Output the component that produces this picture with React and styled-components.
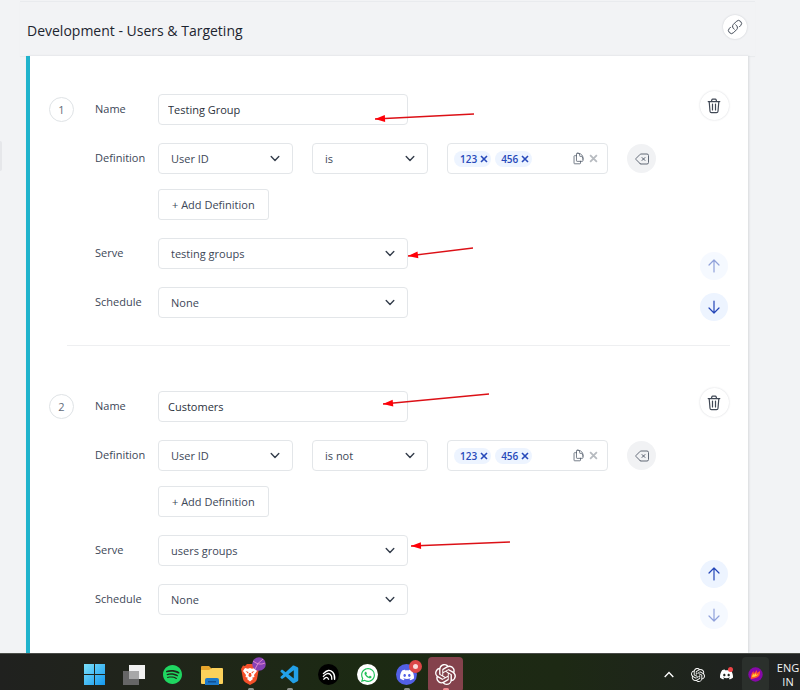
import React from "react";
import styled, { createGlobalStyle } from "styled-components";
import { HiOutlineLink, HiOutlineBackspace, HiOutlineDocumentDuplicate } from "react-icons/hi2";
import { SiSpotify, SiBrave, SiWhatsapp, SiDiscord, SiOpenai } from "react-icons/si";
import { VscVscode } from "react-icons/vsc";

const GlobalStyle = createGlobalStyle`
  *, *::before, *::after { box-sizing: border-box; }
  body {
    margin: 0;
    background: #f2f3f5;
    color: #3d4757;
    font-family: "Open Sans", "Noto Sans", sans-serif;
    font-size: 11px;
  }
  button, input, select { font: inherit; color: inherit; }
  button { cursor: pointer; }
`;

const Page = styled.div`
  min-height: 100vh;
  display: flex;
  flex-direction: column;
`;

const Main = styled.main`
  position: relative;
  flex: 1;
  display: flex;
  flex-direction: column;
`;

const Header = styled.header`
  display: flex;
  align-items: center;
  justify-content: space-between;
  height: 55px;
  margin: 1px 45px 0 20px;
  padding: 0 8px 4px 7px;
  border-top: 1px solid #e9ebee;
  box-shadow: 0 1px 1px rgba(30, 40, 60, 0.04);
`;

const Title = styled.h1`
  margin: 0;
  padding-top: 7px;
  font-size: 14px;
  line-height: 20px;
  font-weight: 500;
  color: #1d2530;
`;

const Panel = styled.section`
  flex: 1;
  margin: 0 52px 0 26px;
  padding: 0 19px;
  background: #fff;
  border-left: 4px solid #20b3cc;
  box-shadow: 1px 0 2px rgba(30, 40, 60, 0.12);
`;

const Group = styled.article`
  display: grid;
  grid-template-columns: 25px minmax(0, 1fr) 30px;
  column-gap: 21px;
  padding: ${(p) => (p.$first ? "35px 0 24px" : "42px 0 20px")};
`;

const Divider = styled.hr`
  height: 1px;
  margin: 0 -1px 0 18px;
  border: 0;
  background: #eeeff1;
`;

const Index = styled.span`
  display: flex;
  align-items: center;
  justify-content: center;
  width: 25px;
  height: 25px;
  margin-top: 6px;
  border: 1px solid #dfe3e6;
  border-radius: 50%;
  color: #606a78;
`;

const Fields = styled.div`
  display: flex;
  flex-direction: column;
  gap: 18px;
  padding: 3px 0 ${(p) => (p.$last ? 14 : 3)}px;
`;

const Row = styled.div`
  display: grid;
  grid-template-columns: 63px minmax(0, 1fr);
`;

const Label = styled.label`
  line-height: 30px;
  font-weight: 500;
`;

const Stack = styled.div`
  display: flex;
  flex-direction: column;
  align-items: flex-start;
  gap: 15px;
`;

const Conditions = styled.div`
  display: flex;
  align-items: center;
  gap: 19px;
  width: 100%;
`;

const TextField = styled.input`
  width: 100%;
  max-width: 250px;
  height: 31px;
  padding: 0 9px;
  border: 1px solid #e3e6e9;
  border-radius: 4px;
  background: #fff;
  color: #2b323c;
`;

const SelectBox = styled.div`
  display: grid;
  align-items: center;
  flex: 0 1 ${(p) => p.$width}px;
  width: 100%;
  max-width: ${(p) => p.$width}px;
  > * { grid-area: 1 / 1; }
  > svg { justify-self: end; margin-right: 13px; pointer-events: none; }
`;

const Select = styled.select`
  appearance: none;
  width: 100%;
  height: 31px;
  padding: 0 30px 0 12px;
  border: 1px solid #e3e6e9;
  border-radius: 4px;
  background: #fff;
  font-weight: 500;
`;

const TagBox = styled.div`
  display: flex;
  align-items: center;
  flex: 0 1 161px;
  height: 31px;
  padding: 0 9px 0 6px;
  gap: 4px;
  border: 1px solid #e3e6e9;
  border-radius: 4px;
`;

const Tag = styled.span`
  display: flex;
  align-items: center;
  gap: 3px;
  height: 16px;
  padding: 0 3px 0 6px;
  border-radius: 8px;
  background: #edf4ff;
  color: #2749ba;
  font-size: 10px;
  font-weight: 600;
`;

const PlainButton = styled.button`
  display: flex;
  padding: 0;
  border: 0;
  background: none;
  color: ${(p) => p.$color || "inherit"};
  margin-left: ${(p) => (p.$push ? "auto" : 0)};
`;

const AddButton = styled.button`
  height: 31px;
  padding: 0 13px;
  border: 1px solid #e3e6e9;
  border-radius: 3px;
  background: #fff;
  font-weight: 500;
  white-space: nowrap;
`;

const tones = {
  white: "background:#fff;color:#404855;box-shadow:0 0 2px rgba(30,40,60,.2);",
  gray: "background:#f1f2f4;color:#626a77;",
  blue: "background:#edf4ff;color:#2345b8;",
};

const RoundButton = styled.button`
  display: flex;
  align-items: center;
  justify-content: center;
  flex: none;
  width: ${(p) => p.$size || 28}px;
  height: ${(p) => p.$size || 28}px;
  padding: 0;
  border: 0;
  border-radius: 50%;
  ${(p) => tones[p.$tone]}
  &:disabled { opacity: 0.5; cursor: default; }
`;

const Side = styled.div`
  display: flex;
  flex-direction: column;
  align-items: center;
  justify-content: space-between;
`;

const Movers = styled.div`
  display: grid;
  gap: 13px;
`;

const Annotations = styled.svg`
  position: absolute;
  top: 0;
  left: 0;
  pointer-events: none;
`;

const Handle = styled.div`
  position: absolute;
  top: 141px;
  left: 0;
  width: 2px;
  height: 30px;
  border-radius: 0 2px 2px 0;
  background: #e6e7ea;
`;

const Taskbar = styled.footer`
  display: flex;
  height: 37px;
  padding: 0 0 0 75px;
  overflow: hidden;
  border-top: 1px solid #4b4e49;
  background: linear-gradient(90deg, #20211f 0%, #20251a 20%, #1c2a13 45%, #1d2914 70%, #1f231f 90%, #202222 100%);
  color: #fff;
`;

const Apps = styled.nav`
  display: flex;
`;

const Tray = styled.div`
  display: flex;
  margin-left: auto;
`;

const TaskButton = styled.button`
  position: relative;
  display: flex;
  align-items: center;
  justify-content: center;
  width: ${(p) => (p.$tray ? 27 : 35)}px;
  height: 35px;
  margin: 3px ${(p) => (p.$tray ? 1 : 2)}px 0;
  padding: 0;
  border: 0;
  border-radius: 4px;
  background: ${(p) => p.$bg || "transparent"};
  color: #fff;
  flex: none;
`;

const Running = styled.i`
  position: absolute;
  bottom: 1px;
  width: 6px;
  height: 3px;
  border-radius: 2px;
  background: ${(p) => p.$color || "#8d918b"};
`;

const Badge = styled.i`
  position: absolute;
  top: ${(p) => (p.$small ? 10 : 3)}px;
  right: ${(p) => (p.$small ? 7 : 2)}px;
  width: ${(p) => (p.$small ? 5 : 13)}px;
  height: ${(p) => (p.$small ? 5 : 13)}px;
  border-radius: 50%;
  border: ${(p) => (p.$small ? 0 : 4)}px solid #dc4648;
  background: ${(p) => (p.$small ? "#ee4447" : "#f9dcdc")};
`;

const Disc = styled.span`
  display: flex;
  align-items: center;
  justify-content: center;
  width: 21px;
  height: 21px;
  border-radius: 50%;
  background: ${(p) => p.$bg};
  color: ${(p) => p.$fg};
`;

const Language = styled.div`
  width: 24px;
  padding-top: 7px;
  margin-left: 6px;
  font-size: 11px;
  line-height: 14px;
  text-align: center;
  color: #f3f3f3;
`;

const Chevron = () => (
  <svg width="10" height="10" viewBox="0 0 10 10" fill="none" stroke="#343d4b" strokeWidth="1.4" strokeLinecap="round" strokeLinejoin="round">
    <path d="M1.2 2.600 5 6.400l3.800-3.800" />
  </svg>
);

const Cross = ({ size = 8 }) => (
  <svg width={size} height={size} viewBox="0 0 8 8" stroke="currentColor" strokeWidth="1.6">
    <path d="m1 1 6 6M7 1 1 7" />
  </svg>
);

const Trash = () => (
  <svg width="16" height="16" viewBox="0 0 16 16" fill="none" stroke="currentColor" strokeWidth="1.2" strokeLinecap="round" strokeLinejoin="round">
    <path d="M2.2 3.6h11.6M5.4 3.4l.5-1.6q.2-.6.8-.6h2.6q.6 0 .8.6l.5 1.6M3.2 3.8l.8 9.4q.1 1.4 1.5 1.4h5q1.4 0 1.5-1.4l.8-9.4M6.5 6v6M9.5 6v6" />
  </svg>
);

const Arrow = ({ down }) => (
  <svg width="14" height="14" viewBox="0 0 14 14" fill="none" stroke="currentColor" strokeWidth="1.2" strokeLinecap="round" strokeLinejoin="round">
    <path d={down ? "M7 1v12M2 8l5 5 5-5" : "M7 13V1M2 6l5-5 5 5"} />
  </svg>
);

const Pointer = ({ from, to }) => {
  const angle = (Math.atan2(to[1] - from[1], to[0] - from[0]) * 180) / Math.PI;
  return (
    <g>
      <path d={`M${from} L${to}`} stroke="#dc1016" strokeWidth="1.3" />
      <path d="M0 0-10-3.4v6.8z" fill="#ff0008" transform={`translate(${to}) rotate(${angle})`} />
    </g>
  );
};

function Dropdown({ id, value, width = 250, label }) {
  return (
    <SelectBox $width={width}>
      <Select id={id} aria-label={label} defaultValue={value}>
        <option>{value}</option>
      </Select>
      <Chevron />
    </SelectBox>
  );
}

function TargetGroup({ number, name, operator, serve, first, last }) {
  const id = (key) => `${key}-${number}`;
  return (
    <Group $first={first}>
      <Index>{number}</Index>
      <Fields $last={last}>
        <Row>
          <Label htmlFor={id("name")}>Name</Label>
          <TextField id={id("name")} defaultValue={name} />
        </Row>
        <Row>
          <Label htmlFor={id("definition")}>Definition</Label>
          <Stack>
            <Conditions>
              <Dropdown id={id("definition")} value="User ID" width={135} />
              <Dropdown label="Operator" value={operator} width={116} />
              <TagBox>
                {["123", "456"].map((tag) => (
                  <Tag key={tag}>
                    {tag}
                    <PlainButton aria-label={`Remove ${tag}`}><Cross /></PlainButton>
                  </Tag>
                ))}
                <PlainButton $push $color="#596270" aria-label="Copy values"><HiOutlineDocumentDuplicate size={13} /></PlainButton>
                <PlainButton $color="#b7bbc0" aria-label="Clear values"><Cross size={9} /></PlainButton>
              </TagBox>
              <RoundButton $tone="gray" $size={29} aria-label="Remove definition"><HiOutlineBackspace size={16} /></RoundButton>
            </Conditions>
            <AddButton>+ Add Definition</AddButton>
          </Stack>
        </Row>
        <Row>
          <Label htmlFor={id("serve")}>Serve</Label>
          <Dropdown id={id("serve")} value={serve} />
        </Row>
        <Row>
          <Label htmlFor={id("schedule")}>Schedule</Label>
          <Dropdown id={id("schedule")} value="None" />
        </Row>
      </Fields>
      <Side>
        <RoundButton $tone="white" $size={29} aria-label="Delete group"><Trash /></RoundButton>
        <Movers>
          <RoundButton $tone="blue" disabled={first} aria-label="Move up"><Arrow /></RoundButton>
          <RoundButton $tone="blue" disabled={last} aria-label="Move down"><Arrow down /></RoundButton>
        </Movers>
      </Side>
    </Group>
  );
}

const WindowsLogo = () => (
  <svg width="21" height="21" viewBox="0 0 21 21">
    <defs>
      <linearGradient id="win" x1="0" y1="0" x2="1" y2="1">
        <stop stopColor="#7be0fb" />
        <stop offset="1" stopColor="#1497ee" />
      </linearGradient>
    </defs>
    <path fill="url(#win)" d="M0 0h10v10H0zM11 0h10v10H11zM0 11h10v10H0zM11 11h10v10H11z" />
  </svg>
);

const TaskView = () => (
  <svg width="22" height="20" viewBox="0 0 22 20">
    <path fill="#f1f1f1" d="M6 0h16v14H6z" />
    <path fill="#666" d="M0 6h16v14H0z" />
    <path fill="#a8a8a8" d="M6 6h10v8H6z" />
  </svg>
);

const Folder = () => (
  <svg width="22" height="20" viewBox="0 0 22 20">
    <path fill="#e7a52c" d="M0 2q0-1 1-1h7l3 3h10q1 0 1 1v13H0z" />
    <path fill="#fbd15b" d="M0 5h8l3-2h10q1 0 1 1v14q0 1-1 1H1q-1 0-1-1z" />
    <path fill="#1c79ca" d="M4 20v-5q0-2 2-2h10q2 0 2 2v5z" />
    <path fill="#104f92" d="M7 16h8v1.5H7z" />
  </svg>
);

const BraveMark = styled.span`
  position: relative;
  display: flex;
  margin-left: -2px;
  padding: 1px;
  color: #f4502a;
`;

const Planet = styled.svg`
  position: absolute;
  top: -6px;
  right: -6px;
`;

const Brave = () => (
  <BraveMark>
    <svg width="18" height="21" viewBox="0 0 18 21">
      <path fill="currentColor" d="m4 2 2-2h6l2 2 2-.5L18 5l-.5 2L16 15q-.5 2-2.500 3.500L9 21l-4.500-2.500Q2.500 17 2 15L.5 7 0 5l2-3.500z" />
      <path fill="#fff" d="m4 4 3 .7L9 4l2 .7L14 4l2 3-3 4 .5 2-2.500.8 1 1.200-3 2.500L6 15l1-1.200-2.500-.8.5-2-3-4z" />
      <path fill="currentColor" d="m4.500 7 3 1-.5 1.500zM13.500 7l-3 1 .5 1.500zM8 9h2l.6 3L9 13.200 7.400 12z" />
    </svg>
    <Planet width="14" height="14" viewBox="0 0 14 14">
      <circle cx="7" cy="7" r="6.800" fill="#8742b5" />
      <path d="M1 4q6 5 12 2M3 12Q5 6 11 2" fill="none" stroke="#dc86cc" />
    </Planet>
  </BraveMark>
);

const Nothing = () => (
  <svg width="14" height="14" viewBox="0 0 15 15" fill="none" stroke="#fff" strokeWidth="1.5" strokeLinecap="round">
    <path d="M1.500 6Q7 0 11.500 4.500 14 7 13.500 12M1.500 9q4.500-5 7.500-2 2 2 1.500 5M2 12q3-4 5 0" />
  </svg>
);

const Flame = () => (
  <svg width="15" height="15" viewBox="0 0 15 15">
    <circle cx="7.500" cy="7.500" r="7.200" fill="#8708a8" />
    <path fill="#ff532e" d="M3 12q-.5-5 2.500-8l.3 2.500L9 3l-.2 3L12 4q.5 5-3 6.500Q5.500 11.500 3 12" />
    <path fill="#ffd13a" d="M4 10q0-2 1.500-3.500l.5 1.500L8 6v2l2-1q-.5 2.500-6 3" />
  </svg>
);

export default function App() {
  return (
    <Page>
      <GlobalStyle />
      <Main>
        <Header>
          <Title>Development - Users &amp; Targeting</Title>
          <RoundButton $tone="white" $size={24} aria-label="Copy link"><HiOutlineLink size={16} /></RoundButton>
        </Header>
        <Panel>
          <TargetGroup number={1} name="Testing Group" operator="is" serve="testing groups" first />
          <Divider />
          <TargetGroup number={2} name="Customers" operator="is not" serve="users groups" last />
        </Panel>
        <Handle />
        <Annotations width="520" height="560" aria-hidden="true">
          <Pointer from={[474, 114]} to={[375, 119]} />
          <Pointer from={[473, 248]} to={[408, 256]} />
          <Pointer from={[489, 394]} to={[383, 404]} />
          <Pointer from={[510, 542]} to={[411, 546]} />
        </Annotations>
      </Main>
      <Taskbar>
        <Apps aria-label="Apps">
          <TaskButton aria-label="Start"><WindowsLogo /></TaskButton>
          <TaskButton aria-label="Task view"><TaskView /></TaskButton>
          <TaskButton aria-label="Spotify"><SiSpotify size={19} color="#1fd661" /></TaskButton>
          <TaskButton aria-label="Files"><Folder /></TaskButton>
          <TaskButton aria-label="Brave"><Brave /><Running /></TaskButton>
          <TaskButton aria-label="Code"><VscVscode size={22} color="#22a0e8" /><Running /></TaskButton>
          <TaskButton aria-label="Audio"><Disc $bg="#000"><Nothing /></Disc></TaskButton>
          <TaskButton aria-label="WhatsApp"><Disc $bg="#fff" $fg="#20c25a"><SiWhatsapp size={14} /></Disc></TaskButton>
          <TaskButton aria-label="Discord"><Disc $bg="#5260e6" $fg="#fff"><SiDiscord size={14} /></Disc><Badge /><Running /></TaskButton>
          <TaskButton $bg="#84424c" aria-label="ChatGPT"><SiOpenai size={21} /><Running $color="#f08b91" /></TaskButton>
        </Apps>
        <Tray>
          <TaskButton $tray aria-label="Hidden icons">
            <svg width="10" height="7" viewBox="0 0 10 7" fill="none" stroke="#fff" strokeWidth="1.3"><path d="m.7 6 4.300-4.500L9.300 6" /></svg>
          </TaskButton>
          <TaskButton $tray aria-label="ChatGPT tray"><SiOpenai size={14} /></TaskButton>
          <TaskButton $tray aria-label="Discord tray"><SiDiscord size={13} /><Badge $small /></TaskButton>
          <TaskButton $tray $bg="#2b302c" aria-label="Flame"><Flame /></TaskButton>
          <Language>ENG<br />IN</Language>
        </Tray>
      </Taskbar>
    </Page>
  );
}
